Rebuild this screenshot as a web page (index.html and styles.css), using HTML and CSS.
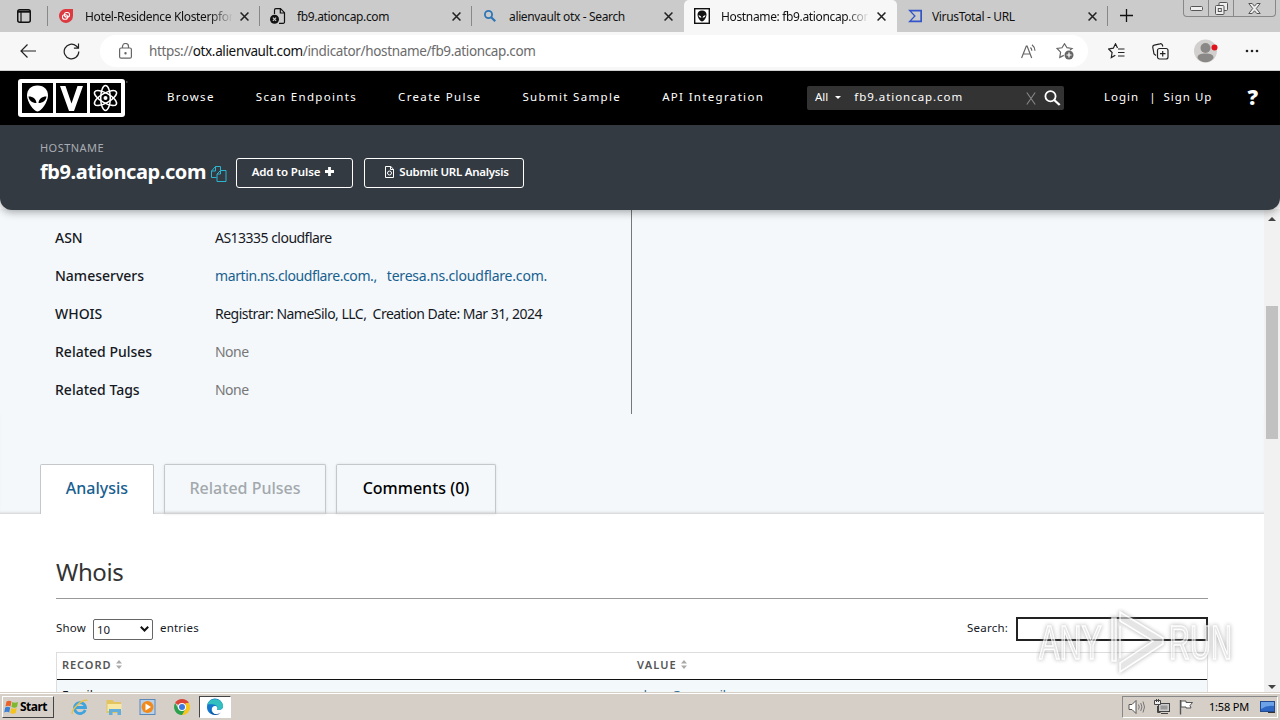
FILE: index.html
```html
<!DOCTYPE html>
<html lang="en">
<head>
  <meta charset="UTF-8" />
  <meta name="viewport" content="width=device-width, initial-scale=1.0"/>
  <title>Hostname: fb9.ationcap.com - AlienVault OTX</title>
  <link rel="stylesheet" href="styles.css">
</head>
<body>
  <!-- Browser tabs -->
  <div class="tabbar">
    <div class="tab-menu">
      <svg width="14" height="14" viewBox="0 0 14 14"><rect x=".75" y=".75" width="12.5" height="12.5" rx="2" fill="none" stroke="#111" stroke-width="1.5"/><path d="M1 2.700h12" stroke="#111" stroke-width="2"/><path d="M4 3v10" stroke="#111" stroke-width="1.200"/></svg>
    </div>
    <div class="tab">
      <svg class="favicon" width="16" height="16" viewBox="0 0 16 16"><path d="M7 1h8v7a7 7 0 1 1-8-7z" fill="#dc3a40"/><g fill="none" stroke="#fff" stroke-width="1.1"><rect x="6.5" y="4.5" width="5" height="4.5" rx="2"/><rect x="4.5" y="6.8" width="5" height="4.5" rx="2"/></g></svg>
      <span class="tab-title faded">Hotel-Residence Klosterpforte</span>
      <svg class="close" viewBox="0 0 8 8"><path d="M.5.5l7 7M7.500.5l-7 7"/></svg>
    </div>
    <div class="tab">
      <svg class="favicon" width="16" height="16" viewBox="0 0 16 16"><path d="M4.500 6V2a1.300 1.300 0 0 1 1.300-1.300h4.700l4 4v9.300a1.300 1.300 0 0 1-1.300 1.300H9M10.300.8V5h4" fill="none" stroke="#111" stroke-width="1.200"/><circle cx="4.500" cy="11.200" r="4.500" fill="#111"/><path d="M2.900 9.600l3.200 3.200M6.100 9.600l-3.200 3.200" stroke="#ccc" stroke-width="1.200"/></svg>
      <span class="tab-title">fb9.ationcap.com</span>
      <svg class="close" viewBox="0 0 8 8"><path d="M.5.5l7 7M7.500.5l-7 7"/></svg>
    </div>
    <div class="tab no-line">
      <svg class="favicon" width="16" height="16" viewBox="0 0 16 16"><circle cx="6.500" cy="6.500" r="3.600" fill="none" stroke="#2e75b6" stroke-width="1.800"/><path d="M9.200 9.200l4 4" stroke="#2e75b6" stroke-width="2.200"/></svg>
      <span class="tab-title">alienvault otx - Search</span>
      <svg class="close" viewBox="0 0 8 8"><path d="M.5.5l7 7M7.500.5l-7 7"/></svg>
    </div>
    <div class="tab active">
      <svg class="favicon" width="16" height="16" viewBox="0 0 16 16"><rect x=".7" y=".7" width="14.600" height="14.600" fill="#fff" stroke="#111" stroke-width="1.400"/><path d="M8 2.500c3 0 4.500 1.800 4.500 4.200 0 2.500-2.500 6.800-4.500 6.800S3.500 9.200 3.500 6.700C3.500 4.300 5 2.500 8 2.500z" fill="#111"/><path d="M4.500 7.200c1.700 0 2.700 1 2.900 2.500-1.700 0-2.700-1-2.900-2.500zM11.500 7.200c-1.700 0-2.700 1-2.900 2.500 1.700 0 2.700-1 2.900-2.500z" fill="#fff"/></svg>
      <span class="tab-title faded">Hostname: fb9.ationcap.com</span>
      <svg class="close" viewBox="0 0 8 8"><path d="M.5.5l7 7M7.500.5l-7 7"/></svg>
    </div>
    <div class="tab last">
      <svg class="favicon" width="16" height="16" viewBox="0 0 16 16"><path d="M1 1.800h14v12.400H1L7 8z" fill="#3455c8"/><path d="M4.500 3.500h8.800v9H4.500L8.800 8z" fill="#ccc"/></svg>
      <span class="tab-title">VirusTotal - URL</span>
      <svg class="close" viewBox="0 0 8 8"><path d="M.5.5l7 7M7.500.5l-7 7"/></svg>
    </div>
    <svg class="new-tab" width="13" height="13" viewBox="0 0 13 13"><path d="M6.500 0v13M0 6.500h13" stroke="#111" stroke-width="1.300"/></svg>
    <div class="window-buttons">
      <span class="min"><svg width="13" height="5" viewBox="0 0 13 5"><rect x=".5" y=".5" width="12" height="4" rx="1"/></svg></span>
      <span class="max"><svg width="13" height="13" viewBox="0 0 13 13"><rect x="4" y=".5" width="8.500" height="8" rx="1"/><rect x=".5" y="3.500" width="8.500" height="9" rx="1"/><rect x="3.300" y="6.500" width="3" height="3"/></svg></span>
      <span class="quit"><svg width="13" height="11" viewBox="0 0 13 11"><path d="M.8.500h3.400l2.300 2.700L8.800.500h3.400L8.300 5.500l3.900 5H8.800L6.500 7.800l-2.300 2.700H.8l3.900-5z"/></svg></span>
    </div>
  </div>

  <!-- Address bar -->
  <div class="toolbar">
    <svg class="back" width="16" height="14" viewBox="0 0 16 14"><path d="M16 7H1M7.500.5L1 7l6.500 6.500"/></svg>
    <svg class="reload" width="17" height="17" viewBox="0 0 17 17"><path d="M15.800 8.500a7.300 7.300 0 1 1-2.500-5.500l1.900 1.900M15.500.6v4.600h-4.600"/></svg>
    <div class="address">
      <svg class="lock" width="13" height="16" viewBox="0 0 13 16"><rect x=".6" y="5" width="11.800" height="10.200" rx="1.500"/><path d="M3.500 5V3.500a3 3 0 0 1 6 0V5"/><circle cx="6.500" cy="10.200" r=".6"/></svg>
      <span class="url">https://<b>otx.alienvault.com</b>/indicator/hostname/fb9.ationcap.com</span>
      <svg class="read" width="16" height="15" viewBox="0 0 16 15"><path d="M.6 14L5.300 2h.8l4.600 12M2.300 10H9M9.500 3.500a5 5 0 0 1 1.300 3.300M11 .8a8 8 0 0 1 3 6"/></svg>
      <svg class="fav" width="18" height="17" viewBox="0 0 18 17"><path d="M14 7l2-1.500-5-.8L8.500.8 6 4.800l-5 .7 3.600 3.700-.8 5.200 4-2"/><circle cx="13" cy="12" r="4.500" fill="#666" stroke="none"/><path d="M13 9.500v5M10.500 12h5" stroke="#fff"/></svg>
    </div>
    <div class="tools">
      <svg width="17" height="16" viewBox="0 0 17 16"><path d="M9.500 5L7.500.8 5.300 5.200.7 6l3.400 3.500-.8 5 4-2.300M10 6h6.500M10 9.500h6.500M10 13h6.500"/></svg>
      <svg width="17" height="17" viewBox="0 0 17 17"><rect x="5.500" y="5.500" width="10.500" height="10.500" rx="2"/><path d="M4 12.500L2 11 .8 4.500a2 2 0 0 1 1.400-2.300L8 .8a2 2 0 0 1 2.500 1.500l.3 1.200M10.700 8v5.500M8 10.700h5.500"/></svg>
      <svg width="24" height="24" viewBox="0 0 24 24"><circle cx="11.500" cy="12" r="11.500" fill="#d2d0ce"/><circle cx="11.500" cy="9" r="5" fill="#8a8886"/><path d="M3.500 19c0-3.500 3-4.500 8-4.500s8 1 8 4.500c-2 3-5 4.200-8 4.200s-6-1.200-8-4.200z" fill="#8a8886"/><circle cx="20.500" cy="8.500" r="3" fill="#e1131c"/></svg>
      <svg width="14" height="4" viewBox="0 0 14 4"><circle cx="2" cy="2" r="1.300"/><circle cx="7" cy="2" r="1.300"/><circle cx="12" cy="2" r="1.300"/></svg>
    </div>
  </div>

  <!-- Site navigation -->
  <header>
    <svg class="logo" width="110" height="38" viewBox="0 0 110 38">
      <rect width="107" height="38" rx="3" fill="#fff"/>
      <path d="M4 4h31v30H4zM38 4h31v30H38zM72 4h31v30H72z" fill="#000"/>
      <path d="M19.500 6.500c7 0 10.500 4.500 10.500 10 0 6-6.500 16-10.500 16S9 22.500 9 16.500c0-5.500 3.500-10 10.500-10z" fill="#fff"/>
      <path d="M10.500 17.500c5 0 7.500 2.500 8 6.500-4.500 0-7.500-2.500-8-6.500zM28.500 17.500c-5 0-7.500 2.500-8 6.500 4.500 0 7.500-2.500 8-6.500z" fill="#000"/>
      <path d="M42 7h5.500l6 17.500L59.500 7H65L56 32h-5z" fill="#fff"/>
      <g fill="none" stroke="#fff" stroke-width="1.500"><ellipse cx="87.500" cy="19" rx="4.800" ry="12.500"/><ellipse cx="87.500" cy="19" rx="4.800" ry="12.500" transform="rotate(60 87.500 19)"/><ellipse cx="87.500" cy="19" rx="4.800" ry="12.500" transform="rotate(120 87.500 19)"/></g>
      <circle cx="87.500" cy="19" r="2" fill="#fff"/>
      <path d="M108 3h1.500" stroke="#888"/>
    </svg>
    <nav>
      <a>Browse</a>
      <a>Scan Endpoints</a>
      <a>Create Pulse</a>
      <a>Submit Sample</a>
      <a>API Integration</a>
    </nav>
    <div class="site-search">
      <span class="scope">All</span>
      <i class="caret"></i>
      <span class="query">fb9.ationcap.com</span>
      <svg class="clear" width="10" height="13" viewBox="0 0 10 13"><path d="M.8.5l8.400 12M9.200.5L.8 12.500" stroke="#888" stroke-width="1.100"/></svg>
      <svg width="17" height="16" viewBox="0 0 17 16"><circle cx="6.500" cy="6.200" r="5.100" fill="none" stroke="#fff" stroke-width="1.800"/><path d="M10.200 10l5.500 5" stroke="#fff" stroke-width="2.300"/></svg>
    </div>
    <div class="account">
      <a>Login</a><span class="pipe">|</span><a>Sign Up</a>
    </div>
    <span class="help">?</span>
  </header>

  <section class="hero">
    <p class="kind">HOSTNAME</p>
    <div class="hero-row">
      <h1>fb9.ationcap.com</h1>
      <svg class="copy" width="16" height="16" viewBox="0 0 16 16"><path d="M5.500 11.500h-5V5L4.500.5h5V4M4.500.5V5h-4M6 15.500h9V4.500H9.500L6 8zM9.500 4.500V8H6"/></svg>
      <button class="btn-pulse">Add to Pulse <svg width="9" height="9" viewBox="0 0 9 9"><path d="M4.500 0v9M0 4.500h9" stroke="#fff" stroke-width="2.800"/></svg></button>
      <button class="btn-submit"><svg width="9" height="12" viewBox="0 0 9 12"><path d="M.5.5h5.300L8.500 3.200v8.300h-8zM5.500.5v3h3" fill="none" stroke="#fff"/><circle cx="4.500" cy="7" r="2" fill="none" stroke="#fff"/></svg> Submit URL Analysis</button>
    </div>
  </section>

  <div class="page">
    <main>
      <div class="details">
        <dl>
          <dt>ASN</dt><dd>AS13335 cloudflare</dd>
          <dt>Nameservers</dt><dd class="links"><a>martin.ns.cloudflare.com.,</a><a>teresa.ns.cloudflare.com.</a></dd>
          <dt>WHOIS</dt><dd>Registrar: NameSilo, LLC,&nbsp; Creation Date: Mar 31, 2024</dd>
          <dt>Related Pulses</dt><dd class="none">None</dd>
          <dt>Related Tags</dt><dd class="none">None</dd>
        </dl>
      </div>

      <div class="sections">
        <div class="section-tab current"><span>Analysis</span></div>
        <div class="section-tab disabled"><span>Related Pulses</span></div>
        <div class="section-tab comments"><span>Comments (0)</span></div>
      </div>

      <div class="panel">
        <h2>Whois</h2>
        <div class="table-controls">
          <span class="show">Show</span>
          <span class="select">10 <svg width="9" height="6" viewBox="0 0 9 6"><path d="M.8.800l3.700 3.700L8.200.8" fill="none" stroke="#111" stroke-width="2"/></svg></span>
          <span class="entries">entries</span>
          <span class="search-label">Search:</span>
          <input type="text" class="table-search" />
        </div>
        <div class="table">
          <div class="row head">
            <span>RECORD<svg width="6" height="9" viewBox="0 0 6 9"><path d="M0 3.500L3 0l3 3.500zM0 5.500L3 9l3-3.500z" fill="#aaa"/></svg></span>
            <span class="value">VALUE<svg width="6" height="9" viewBox="0 0 6 9"><path d="M0 3.500L3 0l3 3.500zM0 5.500L3 9l3-3.500z" fill="#aaa"/></svg></span>
          </div>
          <div class="row">
            <span>Emails</span>
            <span class="email">abuse@namesilo.com</span>
          </div>
        </div>
      </div>
    </main>
    <div class="scrollbar">
      <i class="arrow up"></i>
      <div class="thumb"></div>
      <i class="arrow down"></i>
    </div>
  </div>

  <!-- Windows taskbar -->
  <footer>
    <div class="start">
      <svg width="17" height="16" viewBox="0 0 16 16"><path d="M3 2.500q2.500-1.500 5 0L7 7.500q-2.500-1.300-5 0z" fill="#e8622b"/><path d="M8.800 3q2.500 1.300 5.700 0l-1 5q-2.700 1.300-5.500 0z" fill="#7db82f"/><path d="M1.700 8.500q2.500-1.300 5 0l-1 5q-2.200-1.500-5 0z" fill="#3c7fd6"/><path d="M7.700 9q2.700 1.300 5.500 0l-1 5q-2.700 1.300-5.500 0z" fill="#f6c21c"/></svg>
      Start
    </div>
    <div class="quick">
      <svg width="18" height="18" viewBox="0 0 18 18"><path d="M14.200 12A5.500 5.500 0 1 1 14.500 9.500H5" fill="none" stroke="#3fa3de" stroke-width="2.800"/><path d="M1.500 16C-.5 13 10 1 16.500 2.500" fill="none" stroke="#e8c34a" stroke-width="1.500"/></svg>
      <svg width="18" height="18" viewBox="0 0 18 18"><path d="M1.500 2h6L9 4h7v11H1.500z" fill="#e3c45e"/><path d="M2.500 6h14v7h-14z" fill="#f8e8a6"/><path d="M4 17v-6h12v6h-3.500v-3h-5v3z" fill="#62add9"/></svg>
      <svg width="18" height="18" viewBox="0 0 18 18"><rect x="1" y="1.500" width="15" height="15" fill="#b8d0e8" stroke="#5c88b8"/><circle cx="8.500" cy="9" r="6" fill="#f18a1c"/><path d="M6.500 5.500l5.500 3.500-5.500 3.500z" fill="#fff"/></svg>
      <svg width="18" height="18" viewBox="0 0 18 18"><path d="M9 9L2.100 5A8 8 0 0 1 15.900 5z" fill="#dc4437"/><path d="M9 9h7.900A8 8 0 0 1 9 17l4-6z" fill="#f8c51c"/><path d="M15.900 5A8 8 0 0 1 9 17l3.500-6V5z" fill="#f8c51c"/><path d="M2.100 5A8 8 0 0 0 9 17l3.500-6L5.500 11z" fill="#2da04d"/><circle cx="9" cy="9" r="4" fill="#fff"/><circle cx="9" cy="9" r="3" fill="#3e78e0"/></svg>
      <div class="task-edge"><svg width="18" height="18" viewBox="0 0 18 18"><path d="M1 9a8 8 0 0 1 16-1c.3 3-2.200 4.500-6 4 1-1.500.5-4-2-4-4 0-4.500 5.500 0 8.500C4 17 1 13.500 1 9z" fill="#1476cc"/><path d="M1.500 6.500C3-.5 15.500-1 17 7.500c.5 3-2 4.700-6 4.500 1-1.500 1-3-.5-4.300-2.500-2-6.500-1.700-9-1.200z" fill="#31bfc0"/><path d="M4 10c0 5 5 8 11 4.500A8 8 0 0 1 9 17c-3 0-5.500-3-5-7z" fill="#0c4f9c"/></svg></div>
    </div>
    <div class="tray">
      <svg width="18" height="16" viewBox="0 0 18 16"><path d="M1 5.500h3l4-4v13l-4-4H1z" fill="#fff" stroke="#555"/><path d="M10.500 5.500q1.500 2.500 0 5M12.700 4q2.500 4 0 8M15 2.500q3 5.500 0 11" fill="none" stroke="#777"/></svg>
      <svg width="16" height="16" viewBox="0 0 16 16"><rect x="4.500" y="4.500" width="11" height="8" fill="#ccc" stroke="#444"/><path d="M6.500 6.500h7v4h-7z" fill="#999"/><path d="M7 14.500h7M3.500 7v6.500h3" fill="none" stroke="#444"/><path d="M.5 1.500h6v4h-6zM2.500 0v3M4.500 0v3" fill="#eee" stroke="#444"/></svg>
      <svg width="16" height="16" viewBox="0 0 16 16"><path d="M2.500 1v14.500" stroke="#555" stroke-width="1.400"/><path d="M3 2h5v1.500h6.500L12 6.500l1 2.500H8V8H3z" fill="#fff" stroke="#555"/></svg>
      <span class="clock">1:58 PM</span>
      <svg class="desktop" width="15" height="14" viewBox="0 0 15 14"><rect x=".5" y="1.500" width="14" height="10" fill="#2e66c4" stroke="#234a8c"/><path d="M1 2h13v4Q7 5 1 9z" fill="#6ba2e8"/><path d="M8 12.500h7" stroke="#333"/></svg>
    </div>
  </footer>

  <div class="watermark">
    <svg width="200" height="70" viewBox="0 0 200 70">
      <g class="mark">
        <text x="3" y="51" textLength="63" lengthAdjust="spacingAndGlyphs">ANY</text>
        <text x="133" y="51" textLength="63" lengthAdjust="spacingAndGlyphs">RUN</text>
        <path d="M76 10h4v43h-4zM84 4l43 26v6L84 64v-9l33-22-33-20z"/>
        <path d="M84 18v32"/>
      </g>
    </svg>
  </div>
</body>
</html>
```

FILE: styles.css
```css
* {
  box-sizing: border-box;
}

body {
  margin: 0;
  width: 1280px;
  height: 720px;
  overflow: hidden;
  display: flex;
  flex-direction: column;
  position: relative;
  font-family: "Noto Sans", "Open Sans", sans-serif;
  font-size: 14px;
  color: #16191f;
  background: #fff;
}

svg {
  flex: none;
}

/* browser tabs */
.tabbar {
  display: flex;
  height: 32px;
  flex: none;
  background: #cbcbcb;
  font-size: 12px;
  letter-spacing: -0.35px;
  color: #111;
}

.tab-menu {
  width: 48px;
  padding: 9px 0 0 17px;
  background: linear-gradient(#888, #888) right 6px / 1px 20px no-repeat;
}

.tab-menu svg {
  display: block;
}

.tab {
  width: 212px;
  display: flex;
  align-items: center;
  padding: 0 11px 0 10px;
  background: linear-gradient(#888, #888) right 6px / 1px 20px no-repeat;
}

.tab.no-line {
  background: none;
}

.tab.active {
  width: 213px;
  background: #f7f7f7;
  border-radius: 5px 5px 0 0;
}

.tab.last {
  width: 211px;
}

.tab.last .favicon {
  margin-right: 9px;
}

.favicon {
  margin-right: 11px;
}

.tab-title {
  white-space: nowrap;
  overflow: hidden;
  width: 147px;
  margin-right: auto;
}

.faded {
  -webkit-mask-image: linear-gradient(90deg, #000 125px, transparent 148px);
}

.close {
  width: 9px;
  height: 9px;
  stroke: #222;
  stroke-width: 1.4;
}

.new-tab {
  margin: 9px 0 0 12px;
}

.window-buttons {
  display: flex;
  margin-left: 50px;
  width: 93px;
  height: 17px;
  border: 1px solid #888;
  border-top: none;
  border-radius: 0 0 4px 4px;
}

.window-buttons span {
  display: flex;
  align-items: center;
  justify-content: center;
  width: 25px;
  border-right: 1px solid #888;
}

.window-buttons .quit {
  flex: 1;
  border: none;
}

.window-buttons svg {
  fill: #eee;
  stroke: #555;
}

/* address bar */
.toolbar {
  display: flex;
  align-items: center;
  height: 39px;
  flex: none;
  padding-left: 20px;
  background: #f7f7f7;
  border-bottom: 1px solid #cfcfcf;
}

.toolbar svg {
  fill: none;
  stroke: #222;
  stroke-width: 1.2;
}

.reload {
  margin: 0 20px 0 27px;
}

.address {
  display: flex;
  align-items: center;
  width: 988px;
  height: 32px;
  padding: 0 14px 0 19px;
  background: #fff;
  border-radius: 16px;
}

.toolbar .address svg {
  stroke: #666;
}

.url {
  font-size: 13.5px;
  letter-spacing: -0.35px;
  margin: 0 auto 0 17px;
  color: #6b6b6b;
}

.url b {
  font-weight: normal;
  color: #111;
}

.read {
  margin-right: 19px;
}

.tools {
  display: flex;
  align-items: center;
  margin-left: 20px;
}

.toolbar .tools svg:nth-child(n+3) {
  stroke: none;
}

.tools svg:nth-child(2) {
  margin: 0 25px 0 27px;
}

.toolbar .tools svg:nth-child(4) {
  fill: #222;
  margin-left: 27px;
}

/* site header */
header {
  display: flex;
  align-items: center;
  height: 54px;
  flex: none;
  background: #000;
  color: #fff;
  padding-left: 18px;
  font-size: 11.5px;
}

nav {
  display: flex;
  gap: 41px;
  width: 600px;
  margin: 0 40px 3px 39px;
  letter-spacing: 1.33px;
}

nav a {
  white-space: nowrap;
}

.site-search {
  display: flex;
  align-items: center;
  width: 257px;
  height: 24px;
  background: #333;
  padding: 0 3px 0 8px;
  border-radius: 2px;
}

.scope,
.query {
  margin-bottom: 3px;
}

.caret {
  border: 3px solid transparent;
  border-top-color: #fff;
  margin: 1px 13px 0 7px;
}

.query {
  letter-spacing: 0.95px;
}

.clear {
  margin: 0 8px 0 auto;
}

.account {
  display: flex;
  margin: 0 0 3px 40px;
  letter-spacing: 1px;
}

.pipe {
  margin: 0 7px 0 10px;
}

.help {
  font-size: 21px;
  font-weight: 900;
  margin: 0 0 3px 35px;
}

/* indicator title */
.hero {
  height: 85px;
  flex: none;
  background: #333a42;
  color: #fff;
  padding: 16px 40px 0;
  border-radius: 0 0 12px 12px;
  box-shadow: 0 2px 8px rgba(0, 0, 0, 0.35);
  position: relative;
  z-index: 1;
}

.kind {
  margin: 0;
  font-size: 11px;
  line-height: 14px;
  letter-spacing: 0.45px;
  color: #a9adb3;
}

.hero-row {
  display: flex;
  align-items: center;
  height: 30px;
  margin-top: 3px;
}

h1 {
  font-size: 20px;
  line-height: 30px;
  letter-spacing: -0.4px;
  margin: 0 6px 2px 0;
  font-weight: 700;
  width: 165px;
}

.copy {
  fill: none;
  stroke: #2cb5cf;
  margin-right: 9px;
  margin-top: 2px;
}

button {
  display: flex;
  align-items: center;
  justify-content: center;
  gap: 5px;
  height: 30px;
  padding: 0 0 3px;
  background: none;
  border: 1px solid #fff;
  border-radius: 3px;
  color: #fff;
  font-family: inherit;
  font-size: 11.5px;
  font-weight: 600;
  letter-spacing: -0.25px;
  white-space: nowrap;
}

.btn-pulse {
  width: 117px;
  margin-right: 11px;
  padding-right: 3px;
  letter-spacing: -0.1px;
}

.btn-submit {
  width: 160px;
  padding-left: 6px;
}

/* content */
.page {
  display: flex;
  height: 483px;
  flex: none;
  background: #f4f8fb;
  margin-top: -1px;
}

main {
  width: 1264px;
  overflow: hidden;
}

.details {
  width: 632px;
  height: 205px;
  border-right: 1px solid #777;
  padding: 9px 0 0 55px;
}

dl {
  display: grid;
  grid-template-columns: 160px 1fr;
  grid-auto-rows: 38px;
  align-items: center;
  margin: 0;
  white-space: nowrap;
}

dt {
  font-weight: 500;
}

dd {
  margin: 0;
  letter-spacing: -0.52px;
}

.links {
  letter-spacing: -0.4px;
}

dd a {
  color: #18608f;
}

dd a + a {
  margin-left: 10px;
  letter-spacing: -0.2px;
}

.none {
  color: #777;
}

.sections {
  display: flex;
  gap: 10px;
  padding: 50px 0 0 40px;
  font-size: 16px;
  box-shadow: inset 0 -3px 3px -2px #ccc;
}

.section-tab {
  display: flex;
  align-items: center;
  justify-content: center;
  height: 50px;
  padding-bottom: 3px;
  border: 1px solid #c4c8ca;
  border-bottom: none;
  border-radius: 2px 2px 0 0;
  color: #000;
  font-weight: 500;
  white-space: nowrap;
  box-shadow: 0 0 3px rgba(0, 0, 0, 0.1), inset 0 -3px 3px -2px #ccc;
}

.section-tab.current {
  width: 114px;
  background: #fff;
  color: #18608f;
  box-shadow: none;
}

.section-tab.disabled {
  width: 162px;
  color: #a3a8ac;
}

.section-tab.comments {
  width: 160px;
}

.panel {
  height: 181px;
  background: #fff;
  padding: 40px 56px 0;
}

h2 {
  margin: 0;
  height: 45px;
  font-size: 24px;
  font-weight: normal;
  line-height: 36px;
  letter-spacing: -0.4px;
  color: #333;
  border-bottom: 1px solid #999;
}

.table-controls {
  display: flex;
  align-items: center;
  height: 24px;
  margin-top: 18px;
  font-size: 11.5px;
}

.show,
.entries,
.search-label {
  margin-bottom: 3px;
  letter-spacing: 0.2px;
}

.select {
  display: flex;
  align-items: center;
  justify-content: space-between;
  width: 60px;
  height: 21px;
  border: 1px solid #666;
  border-radius: 2px;
  padding: 0 3px 1px;
  margin: 1px 7px 0 7px;
}

.search-label {
  margin-left: auto;
  margin-right: 8px;
}

.table-search {
  width: 192px;
  height: 24px;
  border: 2px solid #222;
  background: #fff;
}

.table {
  margin-top: 11px;
  border: 1px solid #ddd;
}

.row {
  display: flex;
  padding-left: 5px;
  background: #f3f9fa;
  line-height: 32px;
  font-size: 12px;
}

.row span {
  width: 575px;
  flex: none;
}

.row.head {
  height: 27px;
  background: #fff;
  border-bottom: 1px solid #111;
  font-size: 11px;
  font-weight: 600;
  line-height: 23px;
  letter-spacing: 0.95px;
  color: #555;
}

.head svg {
  margin-left: 4px;
}

.head .value {
  letter-spacing: 1.15px;
}

.email {
  color: #18608f;
}

.scrollbar {
  width: 16px;
  background: #f1f1f1;
  display: flex;
  flex-direction: column;
  align-items: center;
}

.arrow {
  border: 4px solid transparent;
}

.arrow.up {
  border-bottom-color: #444;
  margin-top: 4px;
}

.thumb {
  width: 12px;
  height: 133px;
  margin-top: 85px;
  background: #c1c1c1;
}

.arrow.down {
  border-top-color: #444;
  margin-top: auto;
  margin-bottom: -1px;
}

/* taskbar */
footer {
  display: flex;
  align-items: center;
  height: 28px;
  flex: none;
  background: #d5cfc8;
  border-top: 1px solid #d5cfc8;
  box-shadow: inset 0 1px #fff;
  padding: 2px 2px 1px;
  z-index: 1;
}

.start {
  display: flex;
  align-items: center;
  width: 52px;
  height: 22px;
  padding-bottom: 1px;
  border: 1px solid;
  border-color: #fff #444 #444 #fff;
  font-size: 12px;
  font-weight: bold;
  letter-spacing: -0.5px;
  color: #000;
}

.quick {
  display: flex;
  align-items: center;
  gap: 16px;
  margin-left: 17px;
}

.task-edge {
  width: 32px;
  height: 22px;
  background: #fff;
  border: 1px solid;
  border-color: #444 #fff #fff #444;
  padding: 1px 0 0 6px;
  margin-left: -8px;
}

.tray {
  display: flex;
  align-items: center;
  gap: 8px;
  width: 156px;
  height: 22px;
  margin-left: auto;
  padding-left: 5px;
  border: 1px solid;
  border-color: #888 #fff #fff #888;
  color: #000;
  font-size: 11px;
}

.clock {
  margin: 0 3px 2px 7px;
  letter-spacing: -0.2px;
  white-space: nowrap;
}

/* watermark floats over the page */
.watermark {
  position: absolute;
  left: 1036px;
  top: 608px;
  z-index: 2;
  opacity: 0.8;
}

.mark {
  fill: rgba(255, 255, 255, 0.55);
  stroke: #fff;
  stroke-width: 1.5;
  font: 48px "Liberation Sans", sans-serif;
  filter: drop-shadow(0 0 2px #888);
}
```
